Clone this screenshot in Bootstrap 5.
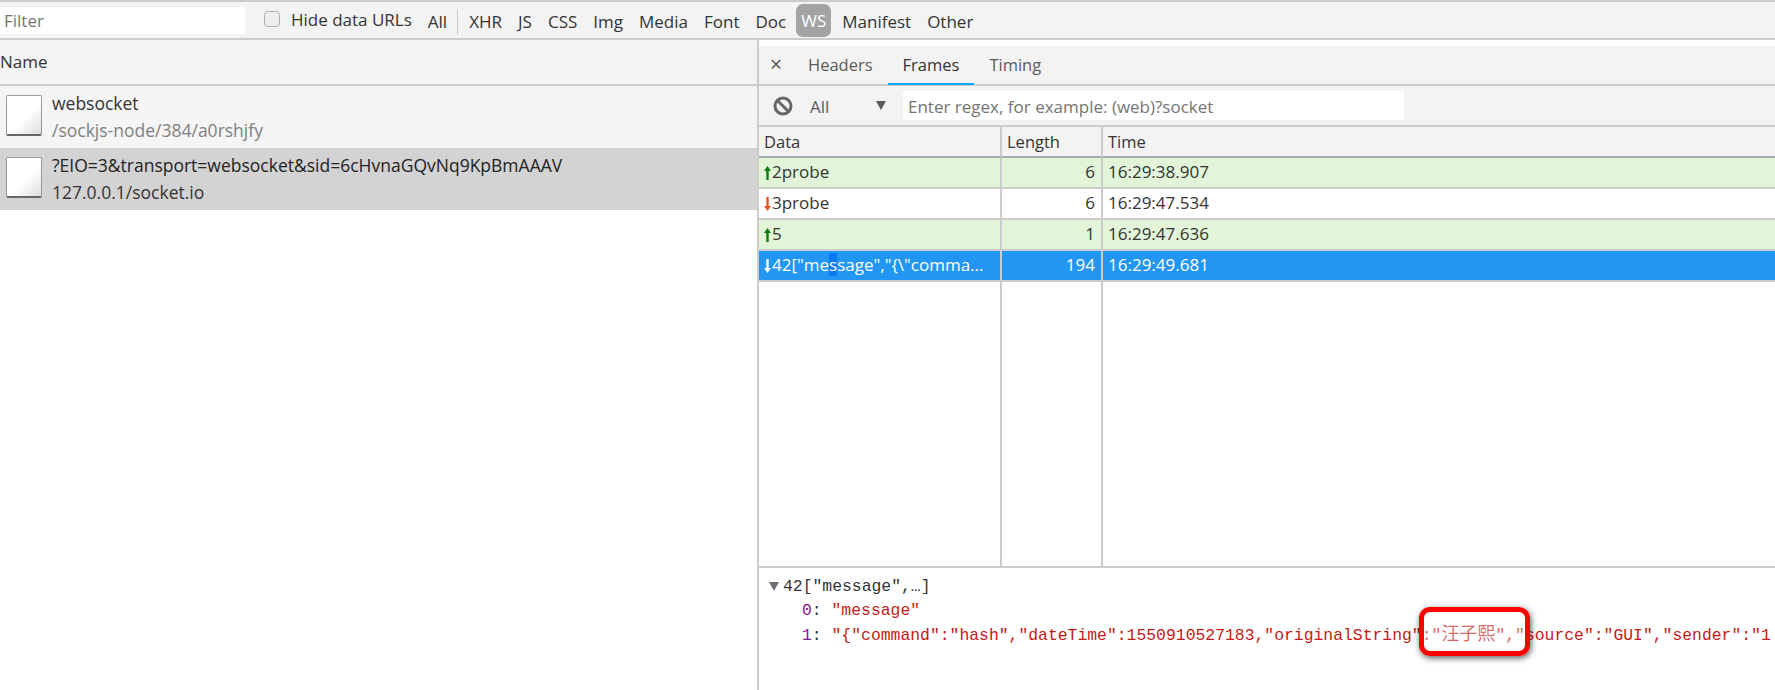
<!DOCTYPE html>
<html lang="en">
<head>
    <meta charset="UTF-8">
    <title>Network - WS frames</title>
    <link href="https://cdn.jsdelivr.net/npm/bootstrap@5.3.0/dist/css/bootstrap.min.css" rel="stylesheet">
    <script src="https://cdn.jsdelivr.net/npm/bootstrap@5.3.0/dist/js/bootstrap.bundle.min.js"></script>
    <style>
        html, body { height: 100%; }
        body {
            width: 1775px;
            height: 690px;
            overflow: hidden;
            background: #fff;
            color: #333;
            font-family: "Open Sans", "Noto Sans", sans-serif;
            font-size: 17px;
            line-height: 1.2;
        }
        .top-bar {
            height: 40px;
            background: #f3f3f3;
            border-top: 2px solid #ccc;
            border-bottom: 2px solid #ccc;
            white-space: nowrap;
        }
        .filter-box {
            width: 245px;
            height: 27px;
            border: 0;
            border-radius: 0;
            padding: 0 4px;
            font: inherit;
            background: #fff;
        }
        .filter-box::placeholder, .regex-box::placeholder { color: #757575; }
        .hide-check {
            width: 16px;
            height: 16px;
            margin: 0 11px 2px 19px;
            background-color: #eee;
            border-color: #aaa;
        }
        .type-btn { padding: 4px 8px 0; }
        .type-btn.all-btn { margin-left: 4px; padding-right: 11px; margin-right: 3px; position: relative; }
        .type-btn.all-btn::after { content: ""; position: absolute; right: 0; top: 1px; height: 26px; border-right: 1px solid #ccc; }
        .type-btn.on {
            background: #a3a3a3;
            color: #fff;
            border-radius: 7px;
            height: 33px;
            line-height: 33px;
            padding: 0 5px;
            margin: 1px 3px 0 2px;
        }
        .left-pane { width: 757px; flex: none; }
        .name-head {
            height: 46px;
            background: #f3f3f3;
            border-bottom: 2px solid #ccc;
            padding: 0;
            line-height: 44px;
        }
        .req-row { height: 62px; padding: 9px 0 0 6px; background: #f5f5f5; }
        .req-row.picked { background: #d3d3d3; color: #222; }
        .doc-icon {
            width: 36px;
            height: 41px;
            flex: none;
            border-radius: 2px;
            background: linear-gradient(135deg, #fff 55%, #ddd 100%);
            border: 1px solid #999;
            border-bottom: 2px solid #666;
        }
        .req-text { margin-left: 10px; line-height: 27px; margin-top: -5px; white-space: nowrap; font-size: 17.5px; }
        .req-sub { color: #808080; }
        .picked .req-sub { color: #333; }
        .right-pane { flex: 1; min-width: 0; border-left: 2px solid #ccc; position: relative; padding-top: 6px; }
        .tab-strip { height: 40px; background: #f3f3f3; border-bottom: 2px solid #ccc; }
        .close-x { width: 34px; text-align: center; font-size: 21px; color: #555; }
        .tab-item { padding: 0 15px; height: 40px; line-height: 40px; color: #5a5a5a; font-size: 16.5px; }
        .tab-item.on { color: #333; border-bottom: 2px solid #03a9f4; }
        .frame-bar { height: 41px; background: #f3f3f3; border-bottom: 2px solid #ccc; }
        .block-icon { margin: 0 0 0 14px; flex: none; }
        .frame-all { width: 66px; margin-left: 17px; color: #5a5a5a; padding-top: 3px; }
        .drop-tri { width: 0; height: 0; border-left: 5px solid transparent; border-right: 5px solid transparent; border-top: 9px solid #5a5a5a; }
        .regex-box {
            width: 501px;
            height: 29px;
            margin-left: 17px;
            border: 0;
            padding: 1px 5px 0;
            font: inherit;
            background: #fff;
        }
        .frame-wrap { height: 439px; }
        .frame-tbl { width: 100%; height: 100%; table-layout: fixed; border-collapse: separate; border-spacing: 0; }
        .frame-tbl th, .frame-tbl td {
            padding: 0 5px;
            border-right: 2px solid #ccc;
            border-bottom: 2px solid #ccc;
            font-weight: 400;
            height: 31px;
            white-space: nowrap;
            overflow: hidden;
        }
        .frame-tbl th { height: 31px; background: #f3f3f3; border-bottom-color: #aaa; font-size: 16.5px; }
        .frame-tbl td:last-child, .frame-tbl th:last-child { border-right: 0; }
        .frame-tbl .num { text-align: right; padding-right: 6px; }
        .frame-tbl tr.sent td { background: #e2f5d8; }
        .frame-tbl tr.sel td { background: #2196f3; color: #fff; }
        .frame-tbl tr.filler td { height: auto; border-bottom: 0; }
        .arr { display: inline-block; vertical-align: -2px; margin-right: 1px; }
        .txt-sel { background: #0a78f0; }
        .detail-pane {
            border-top: 2px solid #ccc;
            padding: 7px 0 0 10px;
            font-family: "Liberation Mono", monospace;
            font-size: 16.4px;
            line-height: 24px;
            white-space: nowrap;
            overflow: hidden;
            height: 124px;
        }
        .tree-tri { display: inline-block; width: 0; height: 0; border-left: 5.5px solid transparent; border-right: 5.5px solid transparent; border-top: 9px solid #6e6e6e; margin-right: 4px; }
        .tree-item { padding-left: 33px; }
        .k { color: #881391; }
        .s { color: #c41a16; }
        .mark-box {
            position: absolute;
            left: 660px;
            top: 567px;
            width: 111px;
            height: 49px;
            border: 5px solid #f00;
            border-radius: 11px;
            background: rgba(255,255,255,.35);
            box-shadow: 1px 2px 6px rgba(0,0,0,.65);
        }
        .cjk { font-family: "Liberation Mono", "Noto Sans CJK SC", monospace; font-size: 18px; }
    </style>
</head>
<body>
    <div class="top-bar d-flex align-items-center">
        <input class="filter-box" type="text" placeholder="Filter">
        <input class="form-check-input mt-0 hide-check" type="checkbox">
        <span>Hide data URLs</span>
        <span class="type-btn all-btn ms-2">All</span>
        <span class="type-btn">XHR</span>
        <span class="type-btn">JS</span>
        <span class="type-btn">CSS</span>
        <span class="type-btn">Img</span>
        <span class="type-btn">Media</span>
        <span class="type-btn">Font</span>
        <span class="type-btn">Doc</span>
        <span class="type-btn on">WS</span>
        <span class="type-btn">Manifest</span>
        <span class="type-btn">Other</span>
    </div>

    <div class="d-flex">
        <div class="left-pane">
            <div class="name-head">Name</div>
            <div class="req-row d-flex">
                <div class="doc-icon"></div>
                <div class="req-text">websocket<br><span class="req-sub">/sockjs-node/384/a0rshjfy</span></div>
            </div>
            <div class="req-row picked d-flex">
                <div class="doc-icon"></div>
                <div class="req-text">?EIO=3&amp;transport=websocket&amp;sid=6cHvnaGQvNq9KpBmAAAV<br><span class="req-sub">127.0.0.1/socket.io</span></div>
            </div>
        </div>

        <div class="right-pane">
            <div class="tab-strip d-flex align-items-center">
                <span class="close-x">&times;</span>
                <span class="tab-item">Headers</span>
                <span class="tab-item on">Frames</span>
                <span class="tab-item">Timing</span>
            </div>
            <div class="frame-bar d-flex align-items-center">
                <svg class="block-icon" width="20" height="20" viewBox="0 0 20 20"><circle cx="10" cy="10" r="8" fill="none" stroke="#666" stroke-width="3"/><path d="M4.5 4.5L15.5 15.5" stroke="#666" stroke-width="3"/></svg>
                <span class="frame-all">All</span>
                <span class="drop-tri"></span>
                <input class="regex-box" type="text" placeholder="Enter regex, for example: (web)?socket">
            </div>
            <div class="frame-wrap">
                <table class="frame-tbl">
                    <colgroup><col style="width:243px"><col style="width:101px"><col></colgroup>
                    <thead><tr><th>Data</th><th>Length</th><th>Time</th></tr></thead>
                    <tbody>
                        <tr class="sent">
                            <td><svg class="arr" width="7" height="14" viewBox="0 0 7 14"><path d="M3.5 0L7 5H4.7V14H2.3V5H0Z" fill="#0a7d0a"/></svg>2probe</td>
                            <td class="num">6</td><td>16:29:38.907</td>
                        </tr>
                        <tr>
                            <td><svg class="arr" width="7" height="14" viewBox="0 0 7 14"><path d="M3.5 14L7 9H4.7V0H2.3V9H0Z" fill="#e8541e"/></svg>3probe</td>
                            <td class="num">6</td><td>16:29:47.534</td>
                        </tr>
                        <tr class="sent">
                            <td><svg class="arr" width="7" height="14" viewBox="0 0 7 14"><path d="M3.5 0L7 5H4.7V14H2.3V5H0Z" fill="#0a7d0a"/></svg>5</td>
                            <td class="num">1</td><td>16:29:47.636</td>
                        </tr>
                        <tr class="sel">
                            <td><svg class="arr" width="7" height="14" viewBox="0 0 7 14"><path d="M3.5 14L7 9H4.7V0H2.3V9H0Z" fill="#fff"/></svg>42["me<span class="txt-sel">s</span>sage","{\"comma...</td>
                            <td class="num">194</td><td>16:29:49.681</td>
                        </tr>
                        <tr class="filler"><td></td><td></td><td></td></tr>
                    </tbody>
                </table>
            </div>
            <div class="detail-pane">
                <div><span class="tree-tri"></span>42["message",…]</div>
                <div class="tree-item"><span class="k">0</span>: <span class="s">"message"</span></div>
                <div class="tree-item"><span class="k">1</span>: <span class="s">"{"command":"hash","dateTime":1550910527183,"originalString":"<span class="cjk">汪子熙</span>","source":"GUI","sender":"1</span></div>
            </div>
            <div class="mark-box"></div>
        </div>
    </div>
</body>
</html>
